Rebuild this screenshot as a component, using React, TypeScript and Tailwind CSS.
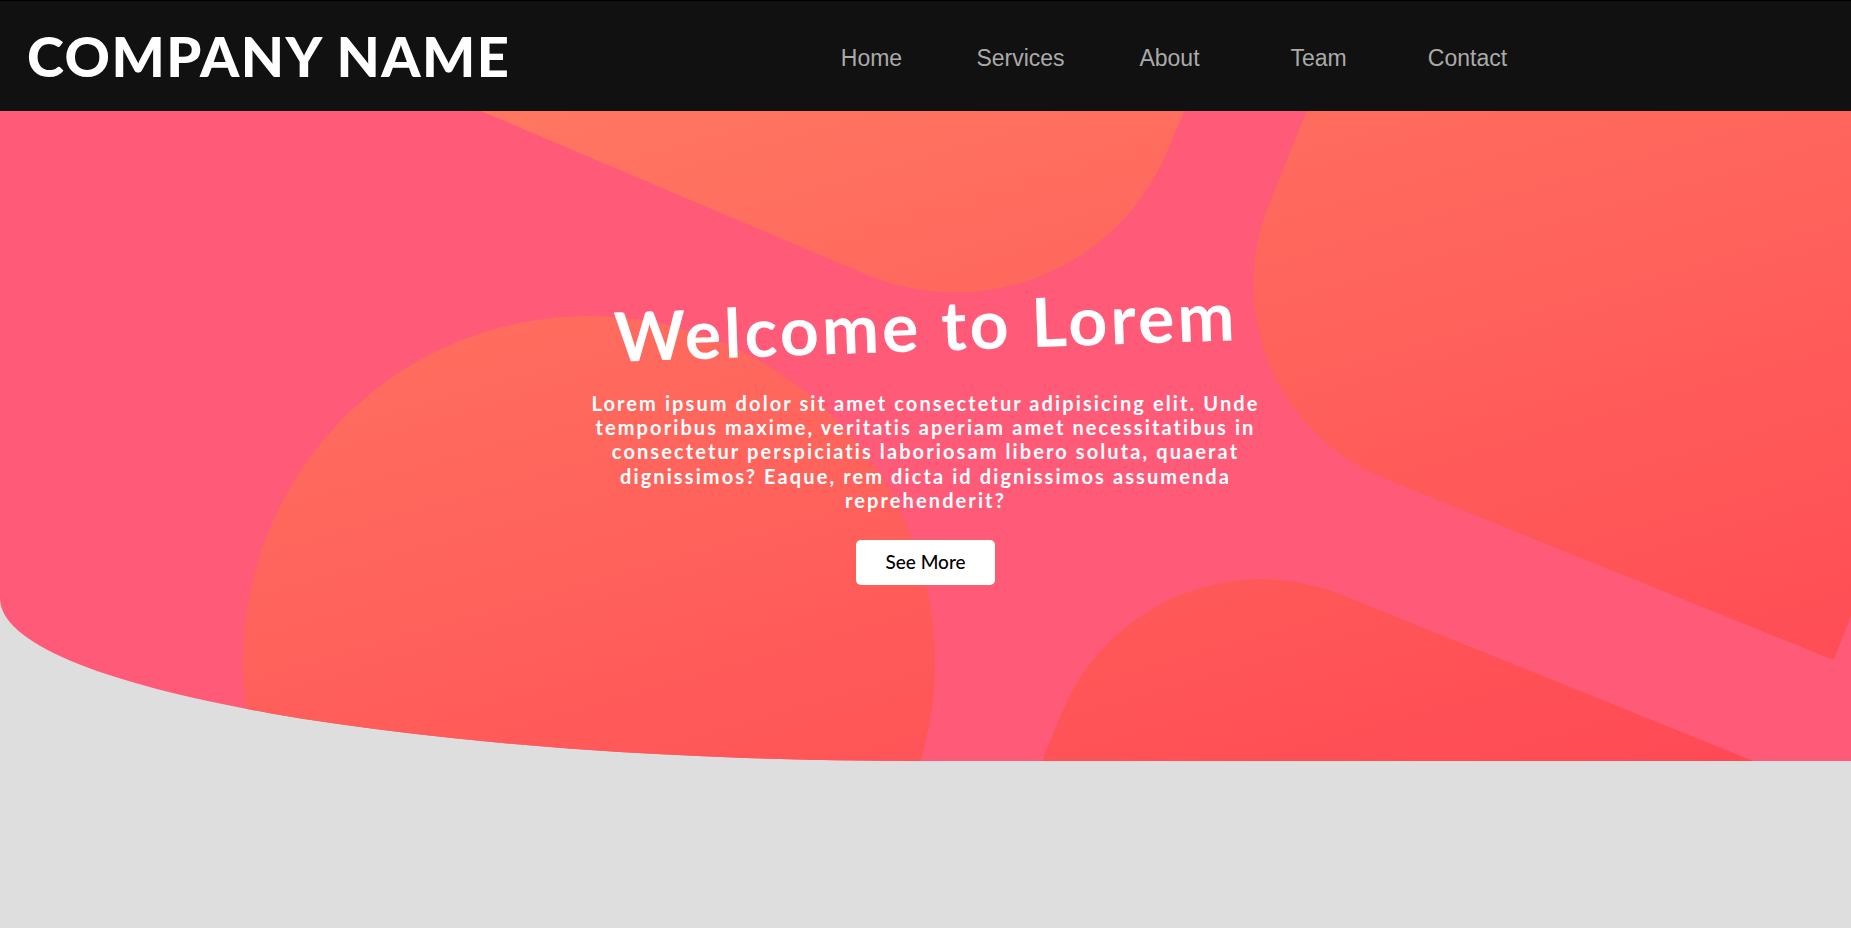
const links = ["Home", "Services", "About", "Team", "Contact"]

function Blobs() {
  return (
    <svg className="absolute inset-0 h-full w-full" viewBox="0 0 1851 650" preserveAspectRatio="none">
      <defs>
        <linearGradient id="blob" gradientUnits="userSpaceOnUse" x1="0" y1="0" x2="315" y2="1094">
          <stop offset="0" stopColor="#ff7d63" />
          <stop offset="1" stopColor="#ff4854" />
        </linearGradient>
        <clipPath id="blobs">
          {/* top middle */}
          <path
            transform="translate(1077 253) rotate(23)"
            d="M -1000 0 L -230 0 A 230 230 0 0 0 0 -230 L 0 -1000 L -1000 -1000 Z"
          />
          {/* right */}
          <path
            transform="translate(1190 289) rotate(22)"
            d="M 0 -900 L 0 -210 A 210 210 0 0 0 210 0 L 694 0 L 694 -900 Z"
          />
          {/* bottom right */}
          <path
            transform="translate(1142 403) rotate(22)"
            d="M 0 216 A 216 216 0 0 1 216 0 L 1000 0 L 1000 1000 L 0 1000 Z"
          />
          {/* bottom left */}
          <circle cx="589" cy="551" r="346" />
        </clipPath>
      </defs>
      <rect x="0" y="0" width="1851" height="650" fill="url(#blob)" clipPath="url(#blobs)" />
    </svg>
  )
}

export default function App() {
  return (
    <div className="min-h-screen bg-[#dedede]">
      {/* Header */}
      <header className="flex h-[111px] items-center border-t border-black bg-[#111111]">
        <div className="w-[797px] pl-[27px]">
          <span className="font-['Lato',sans-serif] text-[56px] font-black leading-none tracking-[1.5px] text-white">
            COMPANY NAME
          </span>
        </div>
        <nav className="mt-[5px] grid grid-cols-5">
          {links.map((link) => (
            <a
              key={link}
              href="#"
              className="w-[149px] text-center font-['Liberation_Sans',Arial,sans-serif] text-[23px] text-[#aaaaaa]"
            >
              {link}
            </a>
          ))}
        </nav>
      </header>

      {/* Hero */}
      <section className="relative h-[650px] overflow-hidden rounded-bl-[50%_25%] bg-[#ff5a78]">
        <Blobs />
        <div className="relative flex h-full flex-col items-center pt-[180px] text-white">
          <h1 className="-rotate-2 font-['Lato',sans-serif] text-[68px] font-bold leading-[68px] tracking-[3.2px]">
            Welcome to Lorem
          </h1>
          <p className="mt-[32px] max-w-[690px] text-center font-['Lato',sans-serif] text-[20px] font-bold leading-[24.2px] tracking-[2.1px]">
            Lorem ipsum dolor sit amet consectetur adipisicing elit. Unde temporibus maxime, veritatis aperiam amet
            necessitatibus in consectetur perspiciatis laboriosam libero soluta, quaerat dignissimos? Eaque, rem dicta id
            dignissimos assumenda reprehenderit?
          </p>
          <button className="mt-[28px] h-[45px] w-[139px] rounded-[5px] bg-white font-['Lato',sans-serif] text-[19px] font-medium text-black">
            See More
          </button>
        </div>
      </section>
    </div>
  )
}
